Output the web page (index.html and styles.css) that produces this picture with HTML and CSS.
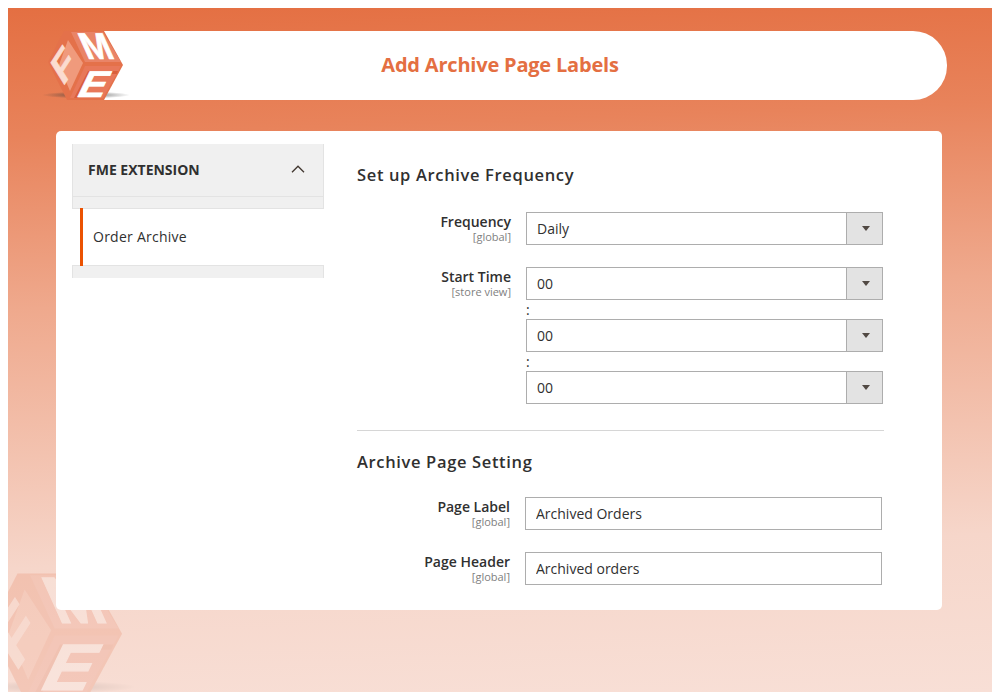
FILE: index.html
```html
<!DOCTYPE html>
<html lang="en">
<head>
<meta charset="utf-8">
<title>Add Archive Page Labels</title>
<link rel="stylesheet" href="styles.css">
</head>
<body>
<svg class="defs" width="0" height="0" aria-hidden="true">
  <defs>
    <radialGradient id="shadow">
      <stop offset="0" stop-color="#3a3a3a" stop-opacity=".75"/>
      <stop offset="1" stop-color="#3a3a3a" stop-opacity="0"/>
    </radialGradient>
    <symbol id="fme" viewBox="40 24 92 80">
      <ellipse cx="86" cy="95" rx="44" ry="3.5" fill="url(#shadow)"/>
      <polygon points="64,31 104,31 123,65 104,100 67,100 48,62" fill="#e4714a"/>
      <polygon points="71,32 103,32 121,62 85,62" fill="#e98467"/>
      <polygon points="68,40 83,63 70,91 59,65" fill="#f09a7c"/>
      <polygon points="85,66 121,66 103,98 70,98" fill="#e8785a"/>
      <polygon points="88,71 118,71 117,74 91,74 78,98 74,98" fill="#d9603c"/>
      <text class="logo-letter logo-pale" transform="matrix(.62 -.96 .536 .857 63 87)">F</text>
      <text class="logo-letter logo-white" transform="matrix(.95 0 .45 1 87 59)">M</text>
      <text class="logo-letter logo-white" transform="matrix(1.1 0 -.48 1 75 97)">E</text>
    </symbol>
  </defs>
</svg>
<main class="frame">
  <svg class="watermark" aria-hidden="true"><use href="#fme"/></svg>
  <svg class="logo" role="img" aria-label="FME"><use href="#fme"/></svg>
  <header class="banner">
    <h1 class="banner-title">Add Archive Page Labels</h1>
  </header>
  <div class="card">
    <nav class="side">
      <div class="side-head">
        <span>FME EXTENSION</span>
        <svg class="chevron" width="14" height="8" viewBox="0 0 14 8"><path d="M1 7.2 7 1.2l6 6" fill="none" stroke="#41362f" stroke-width="1.3"/></svg>
      </div>
      <div class="side-gap"></div>
      <a class="side-item">Order Archive</a>
      <div class="side-foot"></div>
    </nav>
    <div class="content">
      <h2 class="section-title">Set up Archive Frequency</h2>
      <div class="row">
        <div class="label"><span class="label-name">Frequency</span><span class="scope">[global]</span></div>
        <div class="select"><select><option>Daily</option></select></div>
      </div>
      <div class="row row-time">
        <div class="label"><span class="label-name">Start Time</span><span class="scope">[store view]</span></div>
        <div class="time">
          <div class="select"><select><option>00</option></select></div>
          <span class="colon">:</span>
          <div class="select"><select><option>00</option></select></div>
          <span class="colon">:</span>
          <div class="select"><select><option>00</option></select></div>
        </div>
      </div>
      <hr class="rule">
      <h2 class="section-title section-second">Archive Page Setting</h2>
      <div class="row row-input">
        <div class="label"><span class="label-name">Page Label</span><span class="scope">[global]</span></div>
        <input class="text" type="text" value="Archived Orders">
      </div>
      <div class="row row-input">
        <div class="label"><span class="label-name">Page Header</span><span class="scope">[global]</span></div>
        <input class="text" type="text" value="Archived orders">
      </div>
    </div>
  </div>
</main>
</body>
</html>
```
FILE: styles.css
```css
* { box-sizing: border-box; }
html, body { overflow: hidden; }
body { margin: 8px 8px 0; background: #fff; font-family: "Open Sans", sans-serif; color: #303030; }
.defs { position: absolute; }
.logo-letter { font-family: "Liberation Sans", sans-serif; font-weight: 700; font-size: 37px; stroke-width: .7px; }
.logo-white { fill: #fff; stroke: #fff; }
.logo-pale { fill: #fbdcd0; stroke: #fbdcd0; }

.frame {
  position: relative;
  height: 684px;
  overflow: hidden;
  padding: 23px 50px 0 48px;
  background: linear-gradient(178deg, #e46f42 0%, #e8835b 18%, #efa98d 42%, #f6d6ca 78%, #f8dfd6 100%);
}
.logo { position: absolute; left: 32px; top: 16px; width: 92px; height: 80px; z-index: 2; }
.watermark { position: absolute; left: -33px; top: 553px; width: 163px; height: 142px; opacity: .2; }

.banner {
  position: relative;
  margin: 0 -5px 31px 29px;
  height: 69px;
  padding: 0 32px 2px 0;
  display: flex;
  align-items: center;
  justify-content: center;
  background: #fff;
  border-radius: 0 34px 34px 0;
}
.banner-title { margin: 0; font-size: 20px; font-weight: 700; color: #e46f42; letter-spacing: -.2px; }

.card {
  position: relative;
  height: 479px;
  display: flex;
  align-items: flex-start;
  padding: 13px 58px 0 16px;
  background: #fff;
  border-radius: 5px;
}
.side {
  flex: 0 0 252px;
  background: #f0f0f0;
  border-left: 1px solid #e3e3e3;
  border-right: 1px solid #e3e3e3;
}
.side-head {
  height: 53px;
  padding: 0 18px 2px 15px;
  display: flex;
  align-items: center;
  justify-content: space-between;
  border-bottom: 1px solid #e3e3e3;
  font-size: 14px;
  font-weight: 700;
  color: #303030;
}
.side-gap { height: 11px; }
.side-item {
  display: flex;
  align-items: center;
  height: 58px;
  margin-left: -1px;
  margin-right: -1px;
  padding: 0 0 2px 21px;
  font-size: 14px;
  letter-spacing: .25px;
  color: #303030;
  background: #fff;
  border-top: 1px solid #e3e3e3;
  border-bottom: 1px solid #e3e3e3;
  position: relative;
}
.side-item::before { content: ""; position: absolute; left: 8px; top: -1px; bottom: -1px; width: 3px; background: #eb5202; }
.side-foot { height: 12px; }

.content { flex: 1; margin-left: 33px; padding-top: 13px; }
.section-title { margin: 0; font-size: 16.5px; line-height: 24px; font-weight: 600; letter-spacing: .65px; color: #303030; padding-top: 6px; height: 55px; }
.section-second { padding-top: 0; height: 47px; margin-top: 19px; }

.row { display: grid; grid-template-columns: 154px 357px; column-gap: 15px; margin-bottom: 22px; }
.row-input { grid-template-columns: 153px 357px; margin-bottom: 22px; }
.label { display: flex; flex-direction: column; align-items: flex-end; }
.label-name { font-size: 14px; line-height: 20px; font-weight: 600; color: #303030; }
.scope { margin-top: -1px; font-size: 11px; line-height: 11px; color: #808080; }

.select { position: relative; height: 33px; }
.select select {
  appearance: none;
  width: 100%;
  height: 100%;
  padding: 0 0 0 10px;
  border: 1px solid #adadad;
  border-radius: 0;
  background: #fff;
  font: 14px "Open Sans", sans-serif;
  color: #303030;
}
.select::after {
  content: "";
  position: absolute;
  right: 0; top: 0; bottom: 0;
  width: 35px;
  border: 1px solid #adadad;
  background: #e3e3e3;
}
.select::before {
  content: "";
  position: absolute;
  z-index: 1;
  right: 13px; top: 14px;
  border-top: 5px solid #514943;
  border-left: 4px solid transparent;
  border-right: 4px solid transparent;
}
.time { display: flex; flex-direction: column; }
.colon { height: 19px; line-height: 19px; font-size: 14px; color: #303030; }

.rule { margin: 26px 0 0; border: 0; border-top: 1px solid #d6d6d6; }
.text {
  height: 33px;
  padding: 0 10px;
  border: 1px solid #adadad;
  border-radius: 0;
  font: 14px "Open Sans", sans-serif;
  color: #303030;
}
```
